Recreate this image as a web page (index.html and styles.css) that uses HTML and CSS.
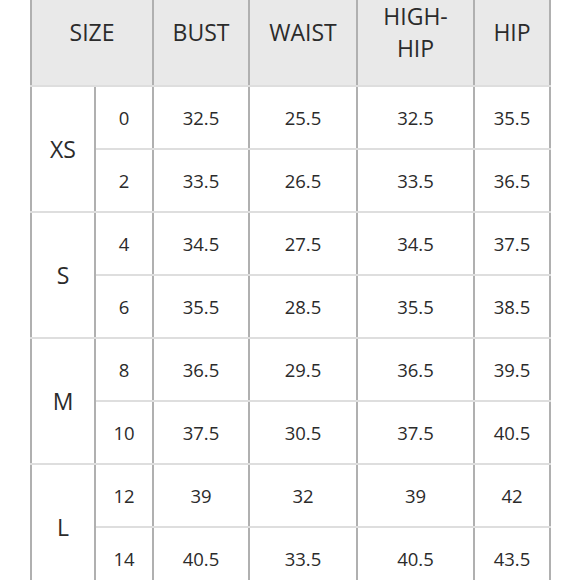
FILE: index.html
```html
<!DOCTYPE html>
<html>
<head>
<meta charset="utf-8">
<link rel="stylesheet" href="styles.css">
</head>
<body>
<div class="wrap">
<table class="chart">
<colgroup>
<col class="c-size"><col class="c-num"><col class="c-bust"><col class="c-waist"><col class="c-high"><col class="c-hip">
</colgroup>
<thead>
<tr class="head">
<th colspan="2">SIZE</th><th>BUST</th><th>WAIST</th><th>HIGH-<br>HIP</th><th>HIP</th>
</tr>
</thead>
<tbody>
<tr><td rowspan="2" class="letter">XS</td><td>0</td><td>32.5</td><td>25.5</td><td>32.5</td><td>35.5</td></tr>
<tr><td>2</td><td>33.5</td><td>26.5</td><td>33.5</td><td>36.5</td></tr>
<tr><td rowspan="2" class="letter">S</td><td>4</td><td>34.5</td><td>27.5</td><td>34.5</td><td>37.5</td></tr>
<tr><td>6</td><td>35.5</td><td>28.5</td><td>35.5</td><td>38.5</td></tr>
<tr><td rowspan="2" class="letter">M</td><td>8</td><td>36.5</td><td>29.5</td><td>36.5</td><td>39.5</td></tr>
<tr><td>10</td><td>37.5</td><td>30.5</td><td>37.5</td><td>40.5</td></tr>
<tr><td rowspan="2" class="letter">L</td><td>12</td><td>39</td><td>32</td><td>39</td><td>42</td></tr>
<tr><td>14</td><td>40.5</td><td>33.5</td><td>40.5</td><td>43.5</td></tr>
</tbody>
</table>
</div>
</body>
</html>
```
FILE: styles.css
```css
html, body {
  margin: 0;
  padding: 0;
  background: #ffffff;
  overflow: hidden;
}
.wrap {
  padding-left: 30px;
  margin-top: -21px;
}
.chart {
  border-collapse: collapse;
  table-layout: fixed;
  width: 519px;
  font-family: "Open Sans", "Liberation Sans", sans-serif;
  color: #2b2b2b;
}
.c-size { width: 64px; }
.c-num { width: 58px; }
.c-bust { width: 96px; }
.c-waist { width: 108px; }
.c-high { width: 117px; }
.c-hip { width: 76px; }
.chart th, .chart td {
  border-left: 2px solid #b0b0b0;
  border-right: 2px solid #b0b0b0;
  border-top: 2px solid #dedede;
  border-bottom: 2px solid #dedede;
  text-align: center;
  vertical-align: middle;
  padding: 0;
}
.head th {
  background: #e9e9e9;
  height: 106px;
  font-size: 23px;
  font-weight: 500;
  line-height: 32px;
  border-top: none;
}
.chart td {
  height: 61px;
  font-size: 18.5px;
  font-weight: 400;
}
.chart td.letter {
  font-size: 23px;
  font-weight: 500;
}
```
